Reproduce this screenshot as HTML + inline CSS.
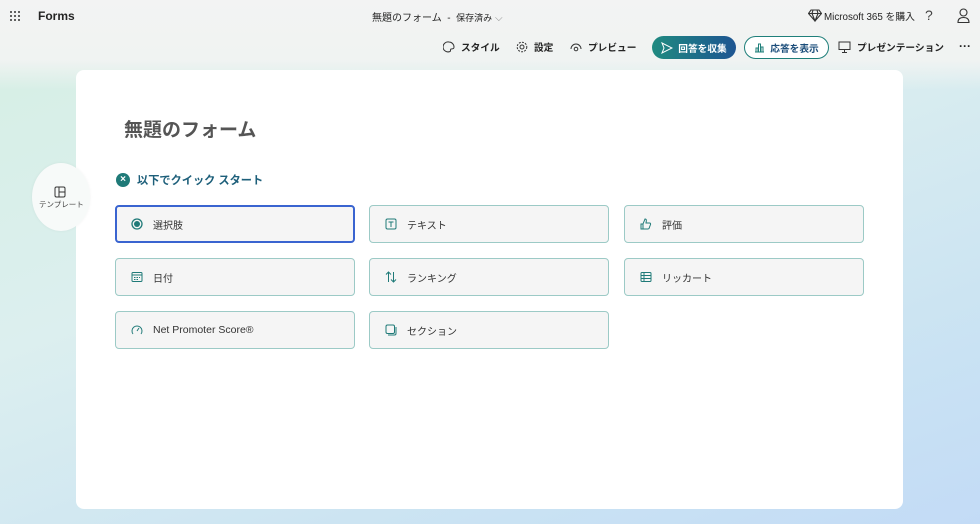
<!DOCTYPE html>
<html><head><meta charset="utf-8"><style>
*{box-sizing:border-box;margin:0;padding:0}
body{width:980px;height:524px;overflow:hidden;font-family:"Liberation Sans","Noto Sans CJK JP",sans-serif;color:#242424;position:relative;
background:linear-gradient(180deg,#f3f3f3 0,#f0f3f2 60px,rgba(0,0,0,0) 90px),linear-gradient(160deg,#d5efe3 0%,#dcefef 40%,#c9e2f3 80%,#c3dbf6 100%);}
.abs{position:absolute}
.card{position:absolute;left:76px;top:70px;width:827px;height:439px;background:#fff;border-radius:8px}
.t{font-size:11px;white-space:nowrap}
.nav{position:absolute;top:40px;font-size:9.7px;font-weight:bold;display:flex;align-items:center;gap:6px;white-space:nowrap}
.opt{position:absolute;width:240px;height:38px;background:#f5f5f5;border:1px solid #9ccac6;border-radius:4px;display:flex;align-items:center;padding-left:15px;font-size:10px;color:#333;gap:10px}
.opt svg{width:12px;height:12px;flex:none}
</style></head><body>
<svg class="abs" style="left:9px;top:10px" width="12" height="12" viewBox="0 0 12 12" fill="#333"><circle cx="2" cy="2" r="1"/><circle cx="6" cy="2" r="1"/><circle cx="10" cy="2" r="1"/><circle cx="2" cy="6" r="1"/><circle cx="6" cy="6" r="1"/><circle cx="10" cy="6" r="1"/><circle cx="2" cy="10" r="1"/><circle cx="6" cy="10" r="1"/><circle cx="10" cy="10" r="1"/></svg>
<div class="abs t" style="left:38px;top:9px;font-size:12px;font-weight:bold">Forms</div>
<div class="abs t" style="left:372px;top:9px;font-size:10px">無題のフォーム&nbsp; - &nbsp;<span style="font-size:9px">保存済み</span> <span style="color:#888">⌵</span></div>
<svg class="abs" style="left:808px;top:9px" width="14" height="13" viewBox="0 0 14 13" fill="none" stroke="#333" stroke-width="1.1"><path d="M3 1h8l2.5 3.5L7 12 .5 4.5z M.5 4.5h13 M5 1 4 4.5 7 12 10 4.5 9 1"/></svg>
<div class="abs t" style="left:824px;top:9px;font-size:9.8px">Microsoft 365 を購入</div>
<div class="abs t" style="left:925px;top:7px;font-size:14px;color:#444">?</div>
<svg class="abs" style="left:957px;top:8px" width="13" height="15" viewBox="0 0 13 15" fill="none" stroke="#333" stroke-width="1.1"><circle cx="6.5" cy="4.5" r="3.5"/><path d="M1 14.5c0-4 2.5-5 5.5-5s5.5 1 5.5 5z"/></svg>

<div class="nav" style="left:443px"><svg width="12" height="12" viewBox="0 0 12 12" fill="none" stroke="#333"><path d="M6 1a5 5 0 1 0 1 9.5c1-.5 0-2 1-2.5s3 .5 3-2A5 5 0 0 0 6 1z"/></svg>スタイル</div>
<div class="nav" style="left:516px"><svg width="12" height="12" viewBox="0 0 12 12" fill="none" stroke="#333"><circle cx="6" cy="6" r="2"/><circle cx="6" cy="6" r="4.8" stroke-dasharray="2 1.2"/></svg>設定</div>
<div class="nav" style="left:570px"><svg width="12" height="12" viewBox="0 0 12 12" fill="none" stroke="#333"><path d="M1 8a5 5 0 0 1 10 0"/><circle cx="6" cy="8" r="1.8"/></svg>プレビュー</div>
<div class="abs" style="left:652px;top:36px;width:84px;height:23px;border-radius:12px;background:linear-gradient(90deg,#1f8a80,#1e5592);color:#fff;font-size:9.7px;font-weight:bold;display:flex;align-items:center;justify-content:center;gap:5px"><svg width="12" height="12" viewBox="0 0 12 12" fill="none" stroke="#fff"><path d="M1 1l10 5-10 5 2-5z"/></svg>回答を収集</div>
<div class="abs" style="left:744px;top:36px;width:85px;height:23px;border-radius:12px;border:1px solid #1f7f7a;background:#fff;color:#1b4d7a;font-size:9.7px;font-weight:bold;display:flex;align-items:center;justify-content:center;gap:5px"><svg width="11" height="11" viewBox="0 0 11 11" fill="none" stroke="#1f7f7a"><path d="M1 10h9M2 10V6h2v4M4.5 10V2h2v8M7 10V5h2v5"/></svg>応答を表示</div>
<div class="nav" style="left:838px"><svg width="13" height="12" viewBox="0 0 13 12" fill="none" stroke="#333"><rect x="1" y="1" width="11" height="7.5"/><path d="M6.5 8.5v3M4 11.5h5"/></svg>プレゼンテーション</div>
<div class="abs t" style="left:959px;top:39px;font-size:12px;font-weight:bold">···</div>

<div class="card"></div>
<div class="abs" style="left:32px;top:163px;width:58px;height:68px;border-radius:50%;background:#f7faf9;box-shadow:0 0 3px rgba(0,0,0,.05)"></div>
<svg class="abs" style="left:54px;top:186px" width="12" height="12" viewBox="0 0 12 12" fill="none" stroke="#333"><rect x="1" y="1" width="10" height="10" rx="1.5"/><path d="M5 1v10M5 6h6"/></svg>
<div class="abs t" style="left:39px;top:199px;font-size:7.5px;color:#444">テンプレート</div>

<div class="abs t" style="left:124px;top:115px;font-size:19px;color:#555;font-weight:bold">無題のフォーム</div>
<div class="abs" style="left:116px;top:173px;width:14px;height:14px;border-radius:50%;background:#1f7a78;color:#fff;font-size:10px;line-height:14px;text-align:center;font-weight:bold">×</div>
<div class="abs t" style="left:137px;top:172px;font-size:11.2px;font-weight:bold;color:#1d5f7a">以下でクイック スタート</div>

<div class="opt" style="left:115px;top:205px;border:2px solid #3a64d0;padding-left:14px"><svg viewBox="0 0 12 12"><circle cx="6" cy="6" r="5" fill="none" stroke="#1f7a78" stroke-width="1.3"/><circle cx="6" cy="6" r="3" fill="#1f7a78"/></svg>選択肢</div>
<div class="opt" style="left:369px;top:205px"><svg viewBox="0 0 12 12" fill="none" stroke="#1f7a78"><rect x="1" y="1" width="10" height="10" rx="1.5"/><path d="M3.5 4h5M6 4v5"/></svg>テキスト</div>
<div class="opt" style="left:624px;top:205px"><svg viewBox="0 0 12 12" fill="none" stroke="#1f7a78"><path d="M1 6h2v5H1zM3 6l2-5c1 0 1.5.5 1.3 2L6 5h3.5c1 0 1.3.8 1 1.5L9 10.5c-.3.5-.7.5-1.2.5H3"/></svg>評価</div>
<div class="opt" style="left:115px;top:258px"><svg viewBox="0 0 12 12" fill="none" stroke="#1f7a78"><rect x="1" y="1.5" width="10" height="9" rx="1"/><path d="M1 4h10M3 6.5h1.5M5.5 6.5h1.5M8 6.5h1M3 8.5h1.5M5.5 8.5h1.5"/></svg>日付</div>
<div class="opt" style="left:369px;top:258px"><svg viewBox="0 0 12 12" fill="none" stroke="#1f7a78"><path d="M3.5 11V1M1 3.5l2.5-2.5L6 3.5M8.5 1v10M6 8.5l2.5 2.5L11 8.5"/></svg>ランキング</div>
<div class="opt" style="left:624px;top:258px"><svg viewBox="0 0 12 12" fill="none" stroke="#1f7a78"><rect x="1" y="1.5" width="10" height="9" rx="1"/><path d="M1 4.5h10M1 7.5h10M4 1.5v9"/></svg>リッカート</div>
<div class="opt" style="left:115px;top:311px;font-size:10.5px"><svg viewBox="0 0 12 12" fill="none" stroke="#1f7a78"><path d="M2 10A5 5 0 1 1 10 10M6 7l2-3"/></svg>Net Promoter Score®</div>
<div class="opt" style="left:369px;top:311px"><svg viewBox="0 0 12 12" fill="none" stroke="#1f7a78"><rect x="1" y="1" width="8.5" height="8.5" rx="1.5"/><path d="M3 11h6.5c1 0 1.5-.5 1.5-1.5V3"/></svg>セクション</div>
</body></html>
